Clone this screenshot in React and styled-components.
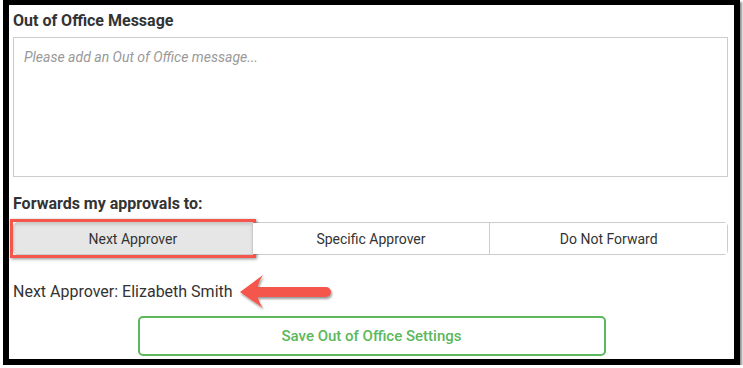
import styled, { createGlobalStyle } from "styled-components";

const GlobalStyle = createGlobalStyle`
  html, body {
    margin: 0;
    padding: 0;
    background: #fff;
  }
  body {
    font-family: Roboto, "Liberation Sans", Arial, sans-serif;
    color: #333;
  }
`;

const Frame = styled.div`
  box-sizing: border-box;
  margin-left: 3px;
  width: 737px;
  height: 365px;
  border: 6px solid #000;
  border-top-width: 5px;
  box-shadow: 2px 2px 2px rgba(0, 0, 0, 0.45);
  padding: 6px 6px 0 4px;
  display: flex;
  flex-direction: column;
`;

const Label = styled.div`
  font-size: 16px;
  font-weight: 700;
  line-height: 20px;
  color: #333;
  margin-top: ${(props) => props.top || 0}px;
`;

const MessageBox = styled.textarea`
  box-sizing: border-box;
  display: block;
  margin-top: 6px;
  width: 100%;
  height: 140px;
  border: 1px solid #ccc;
  padding: 10px 10px;
  resize: none;
  font-family: Roboto, "Liberation Sans", Arial, sans-serif;
  font-size: 14px;
  line-height: 18px;
  color: #333;
  outline: none;

  &::placeholder {
    color: #999;
    font-style: italic;
  }
`;

const ButtonGroup = styled.div`
  margin-top: 8px;
  display: grid;
  grid-template-columns: repeat(3, 1fr);
  height: 33px;
  box-sizing: border-box;
  border: 1px solid #ccc;
  border-radius: 4px;
`;

const Option = styled.button`
  position: relative;
  border: none;
  border-left: ${(props) => (props.first ? "none" : "1px solid #ccc")};
  background: ${(props) => (props.active ? "#e6e6e6" : "#fff")};
  box-shadow: ${(props) =>
    props.active ? "inset 0 2px 3px rgba(0,0,0,0.12)" : "none"};
  border-radius: ${(props) => (props.first ? "3px 0 0 3px" : "0")};
  font-family: Roboto, "Liberation Sans", Arial, sans-serif;
  font-size: 14px;
  color: #333;
  padding: 0;
  cursor: pointer;
`;

const Highlight = styled.span`
  position: absolute;
  top: -4px;
  left: -4px;
  right: -4px;
  bottom: -4px;
  border: 3px solid #f4564c;
  box-shadow: 1px 1px 3px rgba(0, 0, 0, 0.45);
  pointer-events: none;
`;

const ApproverRow = styled.div`
  margin-top: 27px;
  display: flex;
  align-items: center;
  height: 20px;
`;

const ApproverText = styled.span`
  font-size: 16px;
  line-height: 20px;
  color: #333;
`;

const Arrow = styled.svg`
  margin-left: 4px;
  flex: none;
  overflow: visible;
`;

const SaveButton = styled.button`
  align-self: center;
  margin-top: 14px;
  margin-left: 2px;
  width: 468px;
  height: 40px;
  border: 2px solid #5cb85c;
  border-radius: 5px;
  background: #fff;
  color: #5cb85c;
  font-family: Roboto, "Liberation Sans", Arial, sans-serif;
  font-size: 15px;
  font-weight: 500;
  cursor: pointer;
`;

const options = ["Next Approver", "Specific Approver", "Do Not Forward"];

export default function App() {
  return (
    <>
      <GlobalStyle />
      <Frame>
        <Label>Out of Office Message</Label>
        <MessageBox placeholder="Please add an Out of Office message..." />
        <Label top={17}>Forwards my approvals to:</Label>
        <ButtonGroup>
          {options.map((o, i) => (
            <Option key={o} first={i === 0} active={i === 0}>
              {o}
              {i === 0 && <Highlight />}
            </Option>
          ))}
        </ButtonGroup>
        <ApproverRow>
          <ApproverText>Next Approver: Elizabeth Smith</ApproverText>
          <Arrow width="98" height="40" viewBox="0 0 98 40">
            <defs>
              <filter id="arrowShadow" x="-10%" y="-20%" width="130%" height="150%">
                <feDropShadow dx="1" dy="2" stdDeviation="1.2" floodColor="#000" floodOpacity="0.4" />
              </filter>
            </defs>
            <path
              d="M3 20 L26 3 Q21 11 21 15 L89 15 A5 5 0 0 1 89 25 L21 25 Q21 29 26 36 Z"
              fill="#f4564c"
              filter="url(#arrowShadow)"
            />
          </Arrow>
        </ApproverRow>
        <SaveButton>Save Out of Office Settings</SaveButton>
      </Frame>
    </>
  );
}
